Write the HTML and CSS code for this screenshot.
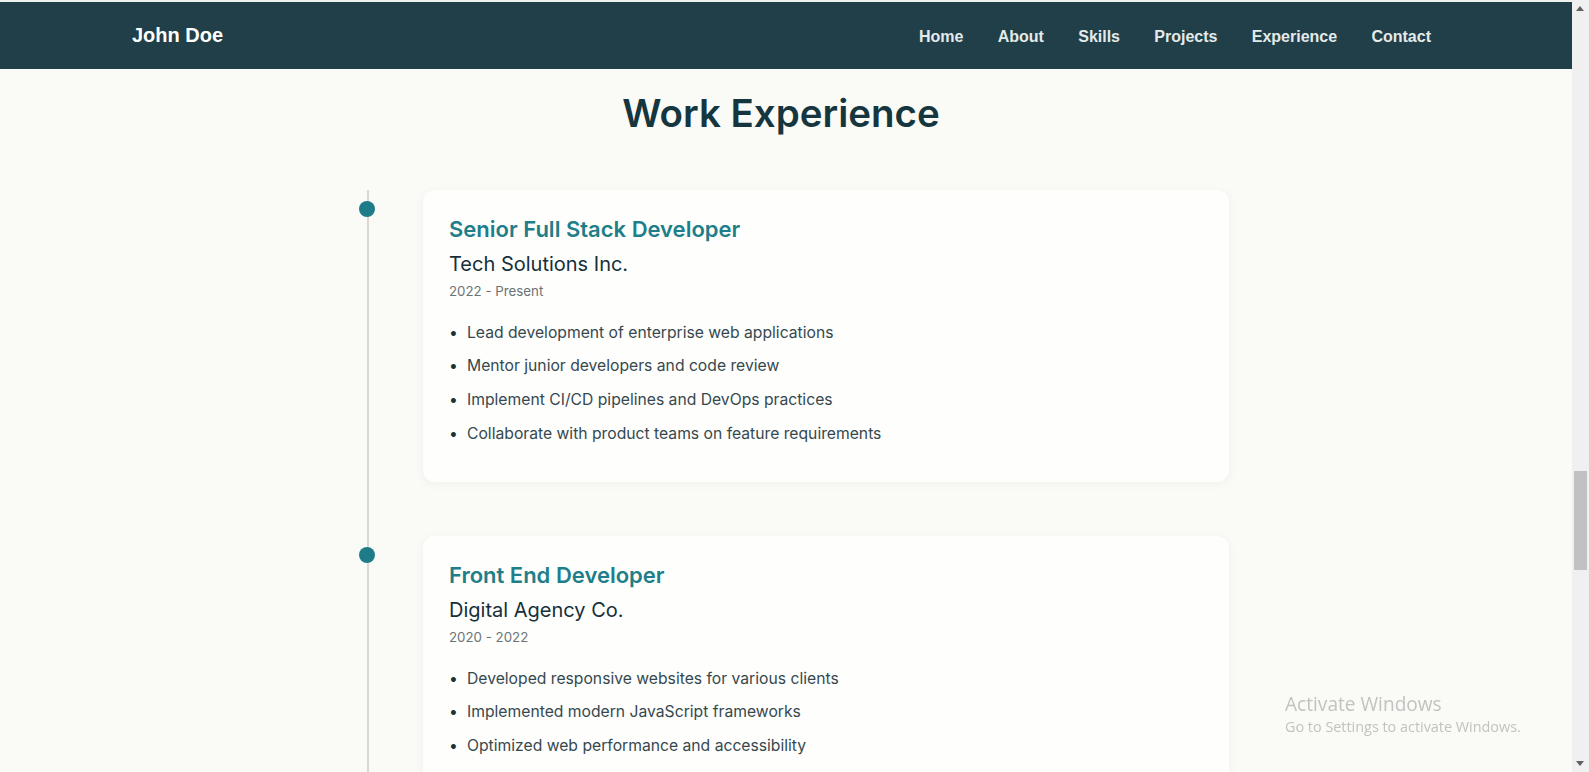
FILE: index.html
```html
<!DOCTYPE html>
<html lang="en">
<head>
<meta charset="utf-8">
<title>John Doe - Work Experience</title>
<link rel="stylesheet" href="styles.css">
</head>
<body>
<header class="site-header">
  <nav class="nav">
    <a class="brand" href="#">John Doe</a>
    <ul class="nav-links">
      <li><a href="#home">Home</a></li>
      <li><a href="#about">About</a></li>
      <li><a href="#skills">Skills</a></li>
      <li><a href="#projects">Projects</a></li>
      <li><a href="#experience">Experience</a></li>
      <li><a href="#contact">Contact</a></li>
    </ul>
  </nav>
</header>

<main class="main">
  <section class="experience" id="experience">
    <h2 class="section-title">Work Experience</h2>
    <div class="timeline">
      <div class="timeline-track">
        <article class="timeline-item">
          <span class="timeline-dot"></span>
          <div class="card">
            <h3 class="job-title">Senior Full Stack Developer</h3>
            <p class="company">Tech Solutions Inc.</p>
            <p class="period">2022 - Present</p>
            <ul class="duties">
              <li>Lead development of enterprise web applications</li>
              <li>Mentor junior developers and code review</li>
              <li>Implement CI/CD pipelines and DevOps practices</li>
              <li>Collaborate with product teams on feature requirements</li>
            </ul>
          </div>
        </article>
        <article class="timeline-item">
          <span class="timeline-dot"></span>
          <div class="card">
            <h3 class="job-title">Front End Developer</h3>
            <p class="company">Digital Agency Co.</p>
            <p class="period">2020 - 2022</p>
            <ul class="duties">
              <li>Developed responsive websites for various clients</li>
              <li>Implemented modern JavaScript frameworks</li>
              <li>Optimized web performance and accessibility</li>
            </ul>
          </div>
        </article>
      </div>
    </div>
  </section>
</main>

<div class="activate">
  <div class="activate-title">Activate Windows</div>
  <div class="activate-sub">Go to Settings to activate Windows.</div>
</div>

<div class="scrollbar" aria-hidden="true">
  <span class="sb-arrow sb-up"></span>
  <span class="sb-thumb"></span>
  <span class="sb-arrow sb-down"></span>
</div>
</body>
</html>
```

FILE: styles.css
```css
html {
  height: 100%;
  overflow: hidden;
}

body {
  margin: 0;
  height: 100%;
  box-sizing: border-box;
  padding-right: 17px;
  background: #fafaf6;
  font-family: Inter, "Noto Sans", sans-serif;
  color: #1c3640;
}

/* ---------- header ---------- */
.site-header {
  background: #213f48;
  border-top: 2px solid #eef0ee;
  padding-right: 10px;
}

.nav {
  max-width: 1300px;
  height: 67px;
  margin: 0 auto;
  display: flex;
  align-items: center;
  justify-content: space-between;
}

.brand {
  font-family: "Liberation Sans", Arial, sans-serif;
  font-weight: 700;
  font-size: 20px;
  color: #ffffff;
  text-decoration: none;
  padding-left: 1px;
}

.nav-links {
  display: flex;
  gap: 34.3px;
  list-style: none;
  margin: 0;
  padding: 0;
}

.nav-links a {
  font-family: "Liberation Sans", Arial, sans-serif;
  font-weight: 700;
  font-size: 16px;
  color: #e4eaea;
  text-decoration: none;
}

/* ---------- main ---------- */
.main {
  padding-right: 10px;
}

.section-title {
  margin: 20px 0 53px;
  font-size: 38.5px;
  line-height: 48px;
  font-weight: 600;
  text-align: center;
  color: #15363f;
}

.timeline {
  width: 900px;
  margin: 0 auto;
  box-sizing: border-box;
  padding-left: 36px;
  padding-right: 2px;
}

.timeline-track {
  border-left: 2px solid #dcd7d0;
  padding-left: 54px;
}

.timeline-item {
  position: relative;
}

.timeline-item + .timeline-item {
  margin-top: 54.5px;
}

.timeline-dot {
  position: absolute;
  left: -64px;
  top: 11px;
  width: 16px;
  height: 16px;
  border-radius: 50%;
  background: #1e7c88;
}

.card {
  background: #fefefc;
  border-radius: 12px;
  box-shadow: 0 2px 10px rgba(30, 50, 50, 0.05);
  padding: 26px 26px 27px 26px;
}

.job-title {
  margin: 0 0 9px;
  font-size: 22px;
  line-height: 26px;
  font-weight: 600;
  color: #1e7f8a;
}

.company {
  margin: 0 0 4.5px;
  font-size: 20px;
  line-height: 26px;
  font-weight: 400;
  color: #15303a;
}

.period {
  margin: 0 0 20px;
  font-size: 13.3px;
  line-height: 18px;
  color: #6a7376;
}

.duties {
  list-style: none;
  margin: 0;
  padding: 0;
}

.duties li {
  display: flex;
  font-size: 15.7px;
  line-height: 25px;
  margin-bottom: 8.8px;
  color: #35484f;
}

.duties li::before {
  content: "\2022";
  flex: 0 0 18px;
  color: #1c3038;
}

/* ---------- OS overlays ---------- */
.activate {
  position: fixed;
  left: 1285px;
  top: 691px;
  font-family: "Open Sans", "Noto Sans", sans-serif;
  color: #c2c2c0;
}

.activate-title {
  font-size: 19.1px;
  line-height: 26px;
}

.activate-sub {
  font-size: 14.4px;
  line-height: 20px;
}

.scrollbar {
  position: fixed;
  top: 0;
  right: 0;
  width: 17px;
  height: 100%;
  background: #f0f0f0;
}

.sb-arrow {
  position: absolute;
  left: 4px;
  width: 0;
  height: 0;
  border-left: 4.5px solid transparent;
  border-right: 4.5px solid transparent;
}

.sb-up {
  top: 6px;
  border-bottom: 5px solid #606060;
}

.sb-down {
  bottom: 6px;
  border-top: 5px solid #606060;
}

.sb-thumb {
  position: absolute;
  left: 2px;
  top: 471px;
  width: 13px;
  height: 99px;
  background: #c1c1c1;
}
```
